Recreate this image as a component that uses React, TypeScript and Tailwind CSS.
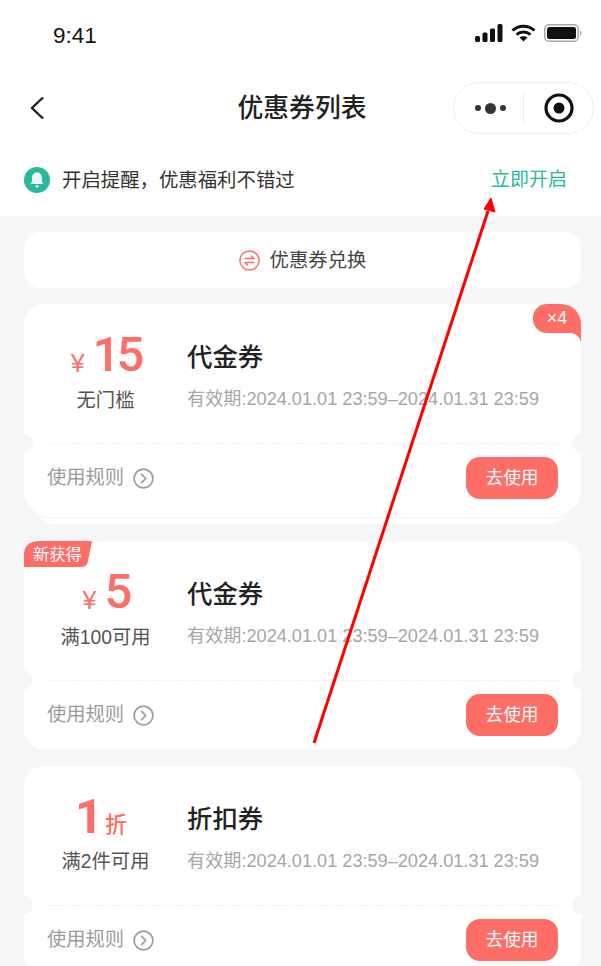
function Chevron() {
  return (
    <svg width="21" height="21" viewBox="0 0 21 21" fill="none" stroke="#9b9b9b" strokeWidth="1.7">
      <circle cx="10.5" cy="10.5" r="9.4" />
      <path d="M8.6 6.4l4.1 4.1-4.1 4.1" strokeLinecap="round" strokeLinejoin="round" />
    </svg>
  );
}

type Coupon = {
  amount: string;
  unit: string;
  rule: string;
  title: string;
  badge?: 'count' | 'new';
  stacked?: boolean;
};

const coupons: Coupon[] = [
  { amount: '15', unit: '¥', rule: '无门槛', title: '代金券', badge: 'count', stacked: true },
  { amount: '5', unit: '¥', rule: '满100可用', title: '代金券', badge: 'new' },
  { amount: '1', unit: '折', rule: '满2件可用', title: '折扣券' },
];

function CouponCard({ coupon }: { coupon: Coupon }) {
  const discount = coupon.unit === '折';
  return (
    <div>
      <div className="relative z-10 h-[208px] rounded-[20px] bg-white">
        {coupon.badge === 'count' && (
          <>
            <div className="absolute right-0 top-0 flex h-[29px] w-[48px] items-center justify-center rounded-tl-[14px] rounded-bl-[14px] rounded-tr-[20px] bg-[#ff6e66] text-[18px] text-white">
              ×4
            </div>
            <div className="absolute right-0 top-[29px] h-[11px] w-[11px] bg-[#ff6e66]">
              <div className="h-full w-full rounded-tr-[11px] bg-white" />
            </div>
          </>
        )}
        {coupon.badge === 'new' && (
          <div className="absolute left-0 top-0 flex h-[26px] w-[68px]">
            <svg className="absolute inset-0" width="68" height="26" viewBox="0 0 68 26">
              <path d="M0 26V14Q0 0 16 0H68L64 20Q63 26 57 26Z" fill="#ff6e66" />
            </svg>
            <span className="relative ml-[9px] text-[16.3px] leading-[26px] text-white">新获得</span>
          </div>
        )}
        <div className="absolute left-[-11px] top-[129px] h-[20px] w-[20px] rounded-full bg-[#f5f6f8]" />
        <div className="absolute right-[-11px] top-[129px] h-[20px] w-[20px] rounded-full bg-[#f5f6f8]" />

        <div className="flex h-[139px]">
          <div className="w-[163px] pt-[29px] text-center">
            {discount ? (
              <div className="flex h-[44px] items-end justify-center pr-[9px]">
                <span className="font-['Roboto',sans-serif] text-[49px] font-bold leading-[44px] tracking-[-3px] text-[#ff6e66]">{coupon.amount}</span>
                <span className="ml-[5px] text-[22px] font-medium leading-[28px] text-[#ff6e66]">{coupon.unit}</span>
              </div>
            ) : (
              <div className="flex h-[44px] items-end justify-center">
                <span className="mb-[1px] mr-[8px] text-[25px] leading-[26px] text-[#ff6e66]">{coupon.unit}</span>
                <span className="font-['Roboto',sans-serif] text-[49px] font-medium leading-[44px] tracking-[-4px] text-[#ff6e66]">{coupon.amount}</span>
              </div>
            )}
            <div className={discount ? 'mt-[8px] text-[19.3px] leading-[30px] text-[#555555]' : 'mt-[9px] text-[19.3px] leading-[30px] text-[#555555]'}>{coupon.rule}</div>
          </div>
          <div className="pt-[34px]">
            <div className="text-[25.4px] font-medium leading-[38px] text-[#222222]">{coupon.title}</div>
            <div className="mt-[8px] whitespace-nowrap text-[18.15px] leading-[30px] text-[#a6a6a6]">
              有效期:2024.01.01 23:59–2024.01.31 23:59
            </div>
          </div>
        </div>

        <div className="mx-[23px] border-t border-dashed border-[#f0f0f0]" />

        <div className="flex h-[68px] items-center justify-between pl-[23px] pr-[23px]">
          <div className="flex items-center gap-[9px] text-[19.3px] leading-[28px] text-[#9b9b9b]">
            使用规则
            <Chevron />
          </div>
          <button type="button" className="h-[42px] w-[92px] rounded-[14px] bg-[#ff6e66] text-[17.7px] text-white">
            去使用
          </button>
        </div>
      </div>
      {coupon.stacked && (
        <>
          <div className="relative z-[5] mx-[8px] -mt-[14px] h-[20px] rounded-b-[16px] border-b border-[#f3f3f3] bg-white" />
          <div className="mx-[14px] -mt-[14px] h-[20px] rounded-b-[16px] bg-white" />
        </>
      )}
    </div>
  );
}

export default function App() {
  return (
    <div className="relative h-[966px] w-[601px] overflow-hidden bg-[#f5f6f8] font-['Liberation_Sans','Noto_Sans_CJK_SC',sans-serif]">
      <div className="bg-white">
        {/* status bar */}
        <div className="flex h-[72px] items-start justify-between pl-[53px] pr-[19px] pt-[22px]">
          <span className="text-[22.5px] leading-[28px] text-[#111111]">9:41</span>
          <div className="mt-[2px] flex items-center gap-[8px]">
            <svg width="28" height="18" viewBox="0 0 28 18" fill="#111111">
              <rect x="0" y="12" width="5" height="6" rx="1.5" />
              <rect x="7.5" y="8.5" width="5" height="9.5" rx="1.5" />
              <rect x="15" y="4.5" width="5" height="13.5" rx="1.5" />
              <rect x="22.5" y="0" width="5" height="18" rx="1.5" />
            </svg>
            <svg width="25" height="18" viewBox="0 0 25 18" fill="none" stroke="#111111" strokeWidth="3">
              <path d="M1.5 6.5C7.5.8 17.5.8 23.5 6.5" />
              <path d="M5.6 10.6c3.8-3.4 10-3.4 13.8 0" />
              <path d="M12.5 17.6l-4-4c2.2-1.8 5.8-1.8 8 0z" fill="#111111" stroke="none" />
            </svg>
            <svg width="38" height="18" viewBox="0 0 38 18">
              <rect x="0.8" y="0.8" width="33.4" height="16.4" rx="4" fill="none" stroke="#a8a8a8" strokeWidth="1.5" />
              <rect x="3" y="3" width="29" height="12" rx="2.5" fill="#111111" />
              <path d="M36 6.5c1 .3 1.6 1.3 1.6 2.5s-.6 2.2-1.6 2.5z" fill="#a8a8a8" />
            </svg>
          </div>
        </div>

        {/* nav */}
        <div className="grid h-[72px] grid-cols-[1fr_auto_1fr] items-center pl-[30px] pr-[7px]">
          <svg width="14" height="24" viewBox="0 0 14 24" fill="none" stroke="#222222" strokeWidth="2.4">
            <path d="M13 1.5L2 12l11 10.5" />
          </svg>
          <div className="mr-[20px] text-[25.8px] font-medium leading-[36px] text-[#222222]">优惠券列表</div>
          <div className="flex justify-end">
            <div className="flex h-[52px] w-[141px] items-center rounded-full border border-[#ececec]">
              <div className="flex w-[69px] items-center justify-center gap-[4px] pl-[4px]">
                <span className="h-[6px] w-[6px] rounded-full bg-[#333333]" />
                <span className="h-[11px] w-[11px] rounded-full bg-[#333333]" />
                <span className="h-[6px] w-[6px] rounded-full bg-[#333333]" />
              </div>
              <div className="h-[32px] w-px bg-[#ececec]" />
              <div className="flex flex-1 items-center justify-center">
                <svg width="30" height="30" viewBox="0 0 30 30">
                  <circle cx="15" cy="15" r="13" fill="none" stroke="#111111" strokeWidth="3.2" />
                  <circle cx="15" cy="15" r="5.5" fill="#111111" />
                </svg>
              </div>
            </div>
          </div>
        </div>

        {/* reminder */}
        <div className="flex h-[72px] items-center justify-between pl-[24px] pr-[34px]">
          <div className="flex items-center gap-[12px]">
            <svg width="26" height="26" viewBox="0 0 26 26">
              <circle cx="13" cy="13" r="13" fill="#26b99a" />
              <path d="M13 5.5c-3.3 0-5 2.5-5 5.5v3.5l-1.6 2.6h13.2L18 14.500V11c0-3-1.700-5.500-5-5.500z" fill="#eaf8f5" />
              <path d="M11 18.500h4a2 2 0 0 1-4 0z" fill="#eaf8f5" />
            </svg>
            <span className="text-[19.4px] leading-[28px] text-[#333333]">开启提醒，优惠福利不错过</span>
          </div>
          <span className="text-[19px] leading-[28px] text-[#26b99a]">立即开启</span>
        </div>
      </div>

      <div className="flex flex-col pl-[24px] pr-[20px] pt-[16px]">
        <div className="flex h-[56px] items-center justify-center gap-[10px] rounded-[16px] bg-white">
          <svg width="21" height="21" viewBox="0 0 21 21" fill="none" stroke="#fb6f68" strokeWidth="1.5">
            <circle cx="10.500" cy="10.500" r="9.600" />
            <path d="M6 8.500h9l-2.500-2.500M15 12.500H6l2.500 2.500" strokeLinecap="round" strokeLinejoin="round" />
          </svg>
          <span className="text-[19.4px] leading-[28px] text-[#444444]">优惠券兑换</span>
        </div>
        <div className="mt-[16px] flex flex-col gap-[17px]">
          {coupons.map(coupon => (
            <CouponCard key={coupon.amount} coupon={coupon} />
          ))}
        </div>
      </div>

      {/* annotation arrow */}
      <svg className="absolute inset-0 z-20" width="601" height="966" viewBox="0 0 601 966" fill="none">
        <path d="M314 743L488 211" stroke="#ff0000" strokeWidth="3" />
        <path d="M491 198L495 212L484 209Z" fill="#ff0000" stroke="#ff0000" strokeWidth="1" />
      </svg>
    </div>
  );
}
